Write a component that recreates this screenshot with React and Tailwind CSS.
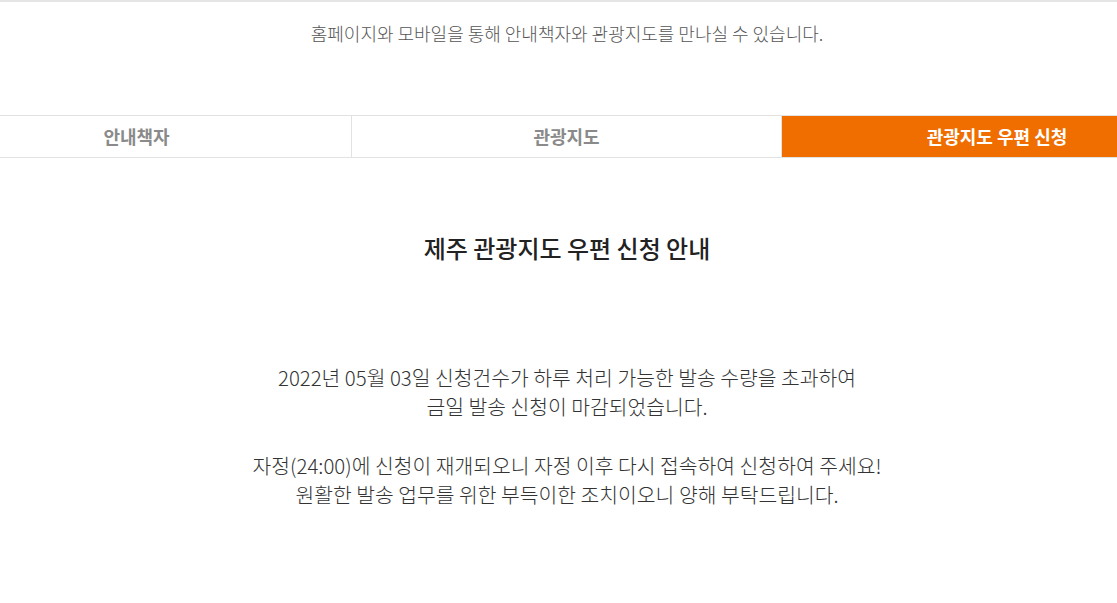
import React from 'react';

const tabs = [
  { label: '안내책자', active: false },
  { label: '관광지도', active: false },
  { label: '관광지도 우편 신청', active: true },
];

const App = () => {
  return (
    <div
      className="min-h-screen w-full overflow-hidden bg-white border-t-2 border-[#e5e5e5]"
      style={{ fontFamily: '"Noto Sans CJK KR", "Noto Sans", sans-serif' }}
    >
      <div className="w-[1290px] ml-[-78px]">
        <p className="pt-[19px] text-center text-[18px] leading-[24px] font-light text-[#555]">
          홈페이지와 모바일을 통해 안내책자와 관광지도를 만나실 수 있습니다.
        </p>

        <ul className="mt-[70px] flex border-y border-[#e2e2e2]">
          {tabs.map((tab) => (
            <li
              key={tab.label}
              className={
                tab.active
                  ? 'w-[430px] h-[41px] flex items-center justify-center bg-[#f06d00] text-white text-[18px] font-bold'
                  : 'w-[430px] h-[41px] flex items-center justify-center text-[#8a8a8a] text-[18px] font-bold border-r border-[#e2e2e2]'
              }
            >
              {tab.label}
            </li>
          ))}
        </ul>

        <h2 className="mt-[74px] text-center text-[24px] leading-[32px] font-medium text-[#222]">
          제주 관광지도 우편 신청 안내
        </h2>

        <div className="mt-[99px] text-center text-[20.4px] leading-[29px] font-light text-[#333]">
          <p>
            2022년 05월 03일 신청건수가 하루 처리 가능한 발송 수량을 초과하여
            <br />
            금일 발송 신청이 마감되었습니다.
          </p>
          <p className="mt-[30px]">
            자정(24:00)에 신청이 재개되오니 자정 이후 다시 접속하여 신청하여 주세요!
            <br />
            원활한 발송 업무를 위한 부득이한 조치이오니 양해 부탁드립니다.
          </p>
        </div>
      </div>
    </div>
  );
};

export default App;
